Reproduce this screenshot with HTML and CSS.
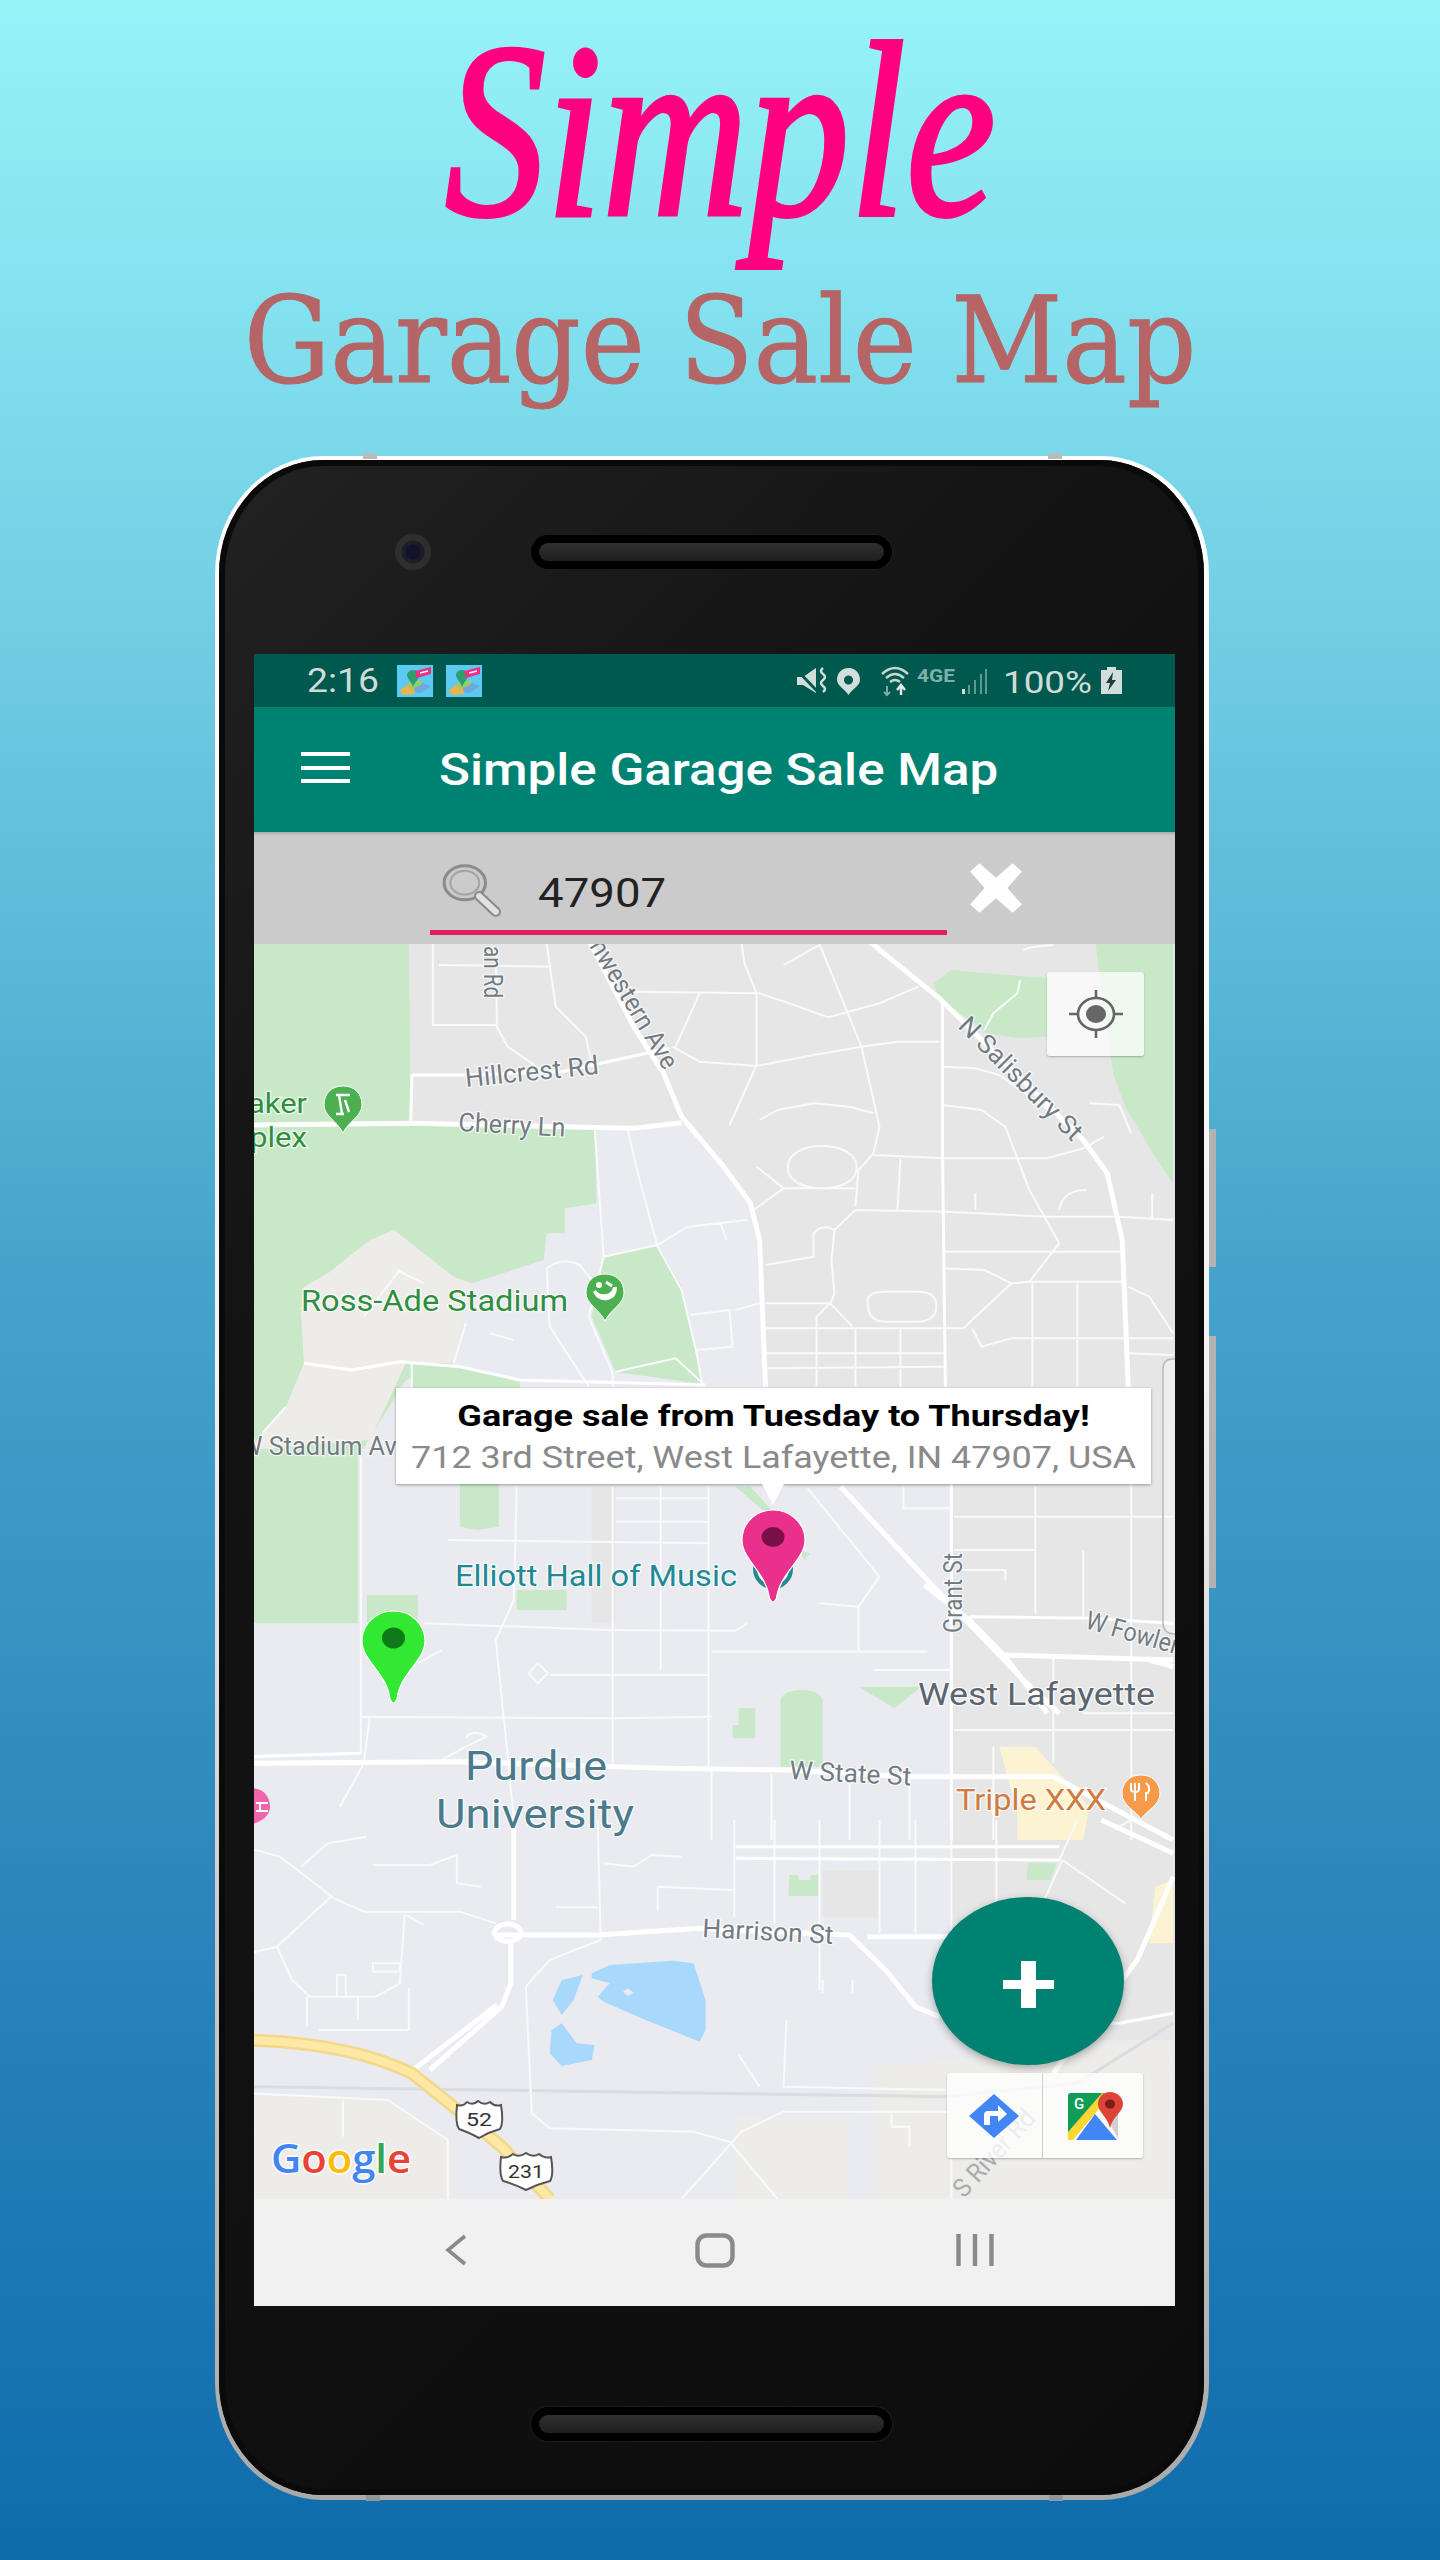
FILE: index.html
```html
<!DOCTYPE html>
<html lang="en">
<head>
<meta charset="utf-8">
<title>Simple Garage Sale Map</title>
<link rel="stylesheet" href="styles.css">
</head>
<body>
<svg class="defs" aria-hidden="true">
  <symbol id="appicon" viewBox="0 0 36 32">
    <rect width="36" height="32" fill="#5ccaf2"/>
    <path d="M3 25 L14 17 L22 20 L17 29 L6 30Z" fill="#e9b44c"/>
    <path d="M16 21 L26 18 L34 21 L24 28 L18 27Z" fill="#6fa8dc"/>
    <path d="M10 20 L18 17 L26 15 L24 20 L14 24Z" fill="#9ccc65"/>
    <path d="M16 5 C12 5 10 8 10 10 C10 14 15 17 16 22 C18 17 22 14 22 10 C22 8 20 5 16 5Z" fill="#2e9e6b"/>
    <path d="M18 6 L34 2 L34 9 L20 13Z" fill="#ec2f7e"/>
    <path d="M23 8 L31 6" stroke="#fff" stroke-width="1.4"/>
  </symbol>
</svg>

<header class="hero">
  <h1 class="script-title">Simple</h1>
  <p class="sub-title">Garage Sale Map</p>
</header>

<main class="phone">
  <span class="nub nub-tl"></span><span class="nub nub-tr"></span>
  <span class="nub nub-bl"></span><span class="nub nub-br"></span>
  <span class="side side-a"></span><span class="side side-b"></span>
  <div class="body">
    <div class="bezel-top">
      <span class="camera"></span>
      <span class="speaker"></span>
    </div>
    <section class="screen">
      <div class="status">
        <span class="time stretch">2:16</span>
        <svg class="appicon"><use href="#appicon"/></svg>
        <svg class="appicon"><use href="#appicon"/></svg>
        <svg class="status-icons" viewBox="790 654 340 53">
          <path d="M797 677 H803 L816 668 V693 L803 685 H797Z" fill="#d2dedb"/>
          <path d="M795 668 L818 692" stroke="#00594f" stroke-width="3"/>
          <path d="M823 668 q-4 3 0 6 q4 3 0 6 q-4 3 0 6 q4 3 0 6" fill="none" stroke="#d2dedb" stroke-width="2.6"/>
          <path fill-rule="evenodd" d="M848.5 668 C841 668 837 674 837 680 C837 686 845 689 848.500 695 C852 689 860 686 860 680 C860 674 856 668 848.5 668Z M848.5 675.5 a4.5 4.5 0 1 0 .01 0Z" fill="#d2dedb"/>
          <g fill="none" stroke="#c6d6d2" stroke-width="2.4">
            <path d="M882 674 Q895 662 908 674"/>
            <path d="M886 678 Q895 670 904 678"/>
            <path d="M890 682 Q895 678 900 682"/>
          </g>
          <path d="M887 686 V695 M884 692 L887 695 L890 692" fill="none" stroke="#7fa9a2" stroke-width="2"/>
          <path d="M901 695 V686 M897 690 L901 685 L905 690" fill="none" stroke="#e3ecea" stroke-width="2.4"/>
          <text class="st-4g" x="917" y="682" textLength="38" lengthAdjust="spacingAndGlyphs">4GE</text>
          <path d="M962 689 h3 v5 h-3Z" fill="#d2dedb"/>
          <path d="M968 685 h2 v9 h-2Z M974 680 h2 v14 h-2Z M980 674 h2 v20 h-2Z M985 669 h2 v25 h-2Z" fill="#5f9a8f"/>
          <text class="st-pct" x="1003" y="693" textLength="89" lengthAdjust="spacingAndGlyphs">100%</text>
          <path d="M1107 667 h9 v3 h6 v24 h-21 v-24 h6Z" fill="#d2dedb"/>
          <path d="M1113 672 L1106 683 H1110 L1108 691 L1116 680 H1112Z" fill="#1f3f3a"/>
        </svg>
      </div>
      <div class="appbar">
        <button class="menu" aria-label="Menu"><span></span><span></span><span></span></button>
        <span class="app-title stretch">Simple Garage Sale Map</span>
      </div>
      <div class="search">
        <div class="search-field">
          <svg class="search-icon" viewBox="0 0 60 52">
            <ellipse cx="24" cy="19" rx="20" ry="16.5" fill="none" stroke="#8c8c8c" stroke-width="3"/>
            <ellipse cx="24" cy="19" rx="14" ry="11.5" fill="none" stroke="#a5a5a5" stroke-width="2"/>
            <path d="M38 32 L54 47" stroke="#8a8a8a" stroke-width="10" stroke-linecap="round"/>
            <path d="M38 32 L54 47" stroke="#e2e2e2" stroke-width="6" stroke-linecap="round"/>
          </svg>
          <span class="search-text stretch">47907</span>
        </div>
        <svg class="search-clear" viewBox="0 0 58 50"><path d="M4 9 L13 1 L29 15 L45 1 L54 9 L40 25 L54 41 L45 49 L29 35 L13 49 L4 41 L18 25Z" fill="#fff"/></svg>
      </div>
      <div class="map">
        <svg class="map-base" viewBox="6.7 12 1536.3 3765" preserveAspectRatio="none">
          <rect x="0" y="0" width="1600" height="3800" fill="#e6e6e6"/>
          <path class="blue" d="M575 565 L725 550 L840 800 L860 1340 L900 1640 L1170 1640 L1170 3300 L1540 3300 L1540 3800 L0 3800 L0 1300Z"/>
          <path class="beige" d="M0 3460 L230 3480 L340 3600 V3800 H0Z M810 3530 H1000 V3800 H810Z M1040 3380 L1540 3300 V3800 H1040Z"/>
          <path class="grey" d="M1170 1640 H1540 V3000 L1320 3240 L1180 3240Z M955 2790 H1050 V2930 H955Z M570 1640 H610 V2050 H570Z"/>
          <path class="park" d="M0 0 L265 0 L268 545 L575 570 L578 790 L525 805 L525 880 L495 880 L490 960 L370 1030 L340 1270 L260 1320 L180 1550 L180 2050 L0 2050Z"/>
          <path class="beige" d="M240 870 L340 1010 L370 1030 L340 1270 L260 1270 L200 1500 L0 1530 L20 1480 L60 1400 L90 1270 L85 1120 L90 1040 L130 1000 L200 900Z"/>
          <path class="park" d="M1410 0 L1540 0 L1540 730 L1510 650 L1460 500 L1440 400 L1415 80Z M1140 130 L1170 90 L1330 115 L1330 290 L1280 295 L1230 280 L1150 175Z M590 950 L680 915 L720 1040 L745 1240 L752 1332 L610 1295 L570 1130Z M270 1270 L340 1275 L450 1320 L450 1345 H270Z"/>
          <g transform="translate(0 1320)">
            <path class="park" d="M350 310 H415 V440 L380 450 L350 440Z M195 645 H280 V730 H195Z M445 630 H528 V690 H445Z M885 960 Q890 930 920 930 Q950 930 955 960 V1160 H885Z M1015 920 H1120 L1075 985Z M815 985 H843 V1075 H805 V1035 H815Z M810 320 H835 L870 390 H855Z M915 510 L935 520 L925 540Z"/>
            <path class="yellow" d="M1250 1100 H1310 L1400 1280 L1390 1380 H1280 V1300Z"/>
            <path class="road r2" d="M605 320 V1150 M685 320 V870 M765 320 V1160 M1470 300 V1380 M1310 320 V700 M1390 510 V710 M445 320 L440 660 L410 780 L430 1130 L440 1320 M185 230 V1120 M290 730 L600 750 L810 752 L830 730 M610 355 H765 M610 425 H765 M330 480 L765 490 M610 885 H765 M185 1010 L610 1015 L770 1010 M930 325 L1050 590 L1015 680 V810 M950 670 L1015 680 M1090 320 V385 H1170 M1175 410 H1540 M1175 510 H1310 M1180 570 H1260 V600 M1040 870 H1170 M770 815 H1130 M1175 1050 H1540 M480 850 L497 880 L480 910 L465 880Z M500 885 H610 M360 1075 Q370 1045 395 1070 L360 1100 L320 1140 M770 1165 V1380 M870 1180 V1380 M1000 1180 V1380 M1100 1190 V1380 M1240 1100 V1380 M1340 830 V1150 M1390 1000 H1540 M280 850 L320 810 M200 1010 L190 1150 M190 1150 L150 1280"/>
            <path class="road r3" d="M1170 300 V1380 M1200 710 L1400 715 L1540 730 M185 1120 L0 1130"/>
            <path class="road r5" d="M985 320 L1140 620 L1290 900 L1350 1000 M1125 615 L1200 720 L1260 830 L1330 1000 M1260 825 L1540 840 M1500 840 L1540 860 M0 1150 L350 1145 L690 1165 L900 1170 L1100 1190 L1340 1190 L1540 1380"/>
          </g>
          <g class="r-upper">
            <path class="road r2" d="M315 75 L500 80 M305 12 V255 H410 L430 320 L490 395 M410 20 L412 255 M495 12 L510 200 L560 290 L570 370 M635 155 L850 160 L900 190 L965 232 L1050 190 L1115 140 M750 160 L710 320 M820 12 L825 70 L845 160 V375 L800 555 M890 75 L950 15 M950 12 L1020 320 L1050 560 L1040 640 L1015 690 L1010 800 M705 320 L750 365 L845 378 L940 345 L1020 320 L1080 305 H1150 M1155 380 L1210 385 L1250 405 L1340 520 M1155 495 L1220 510 L1260 560 L1300 750 L1350 910 L1300 1025 M850 540 L880 510 L940 490 L1000 500 L1040 520 M1040 645 L1160 655 H1330 L1390 625 L1425 590 M897 682 C897 640 925 618 953 618 C985 618 1012 640 1012 682 C1012 725 985 745 953 745 C925 745 897 725 897 682 M840 810 L890 745 H1010 M845 680 L890 745 M1010 810 L1160 815 L1330 830 H1450 L1540 840 M1085 655 L1080 810 M1010 810 L975 870 Q955 850 940 880 V950 L860 975 M975 870 L970 960 L975 1060 L968 1090 L945 1130 V1340 M968 1090 L1005 1160 M860 1090 H968 M860 1165 H1190 L1270 1030 L1300 1025 H1460 M1010 1165 V1340 M1085 1165 V1340 M860 1240 H1160 M860 1285 L1160 1280 M1030 1085 Q1030 1055 1060 1055 H1115 Q1145 1055 1145 1100 Q1145 1145 1110 1145 H1060 Q1030 1145 1030 1085Z M1155 985 L1225 990 L1270 1030 M1155 935 H1460 M1305 1030 V1340 M1380 1030 V1340 M1465 1040 L1500 1070 L1540 1180 M1205 1165 L1220 1220 L1270 1195 H1540 M1465 1240 L1540 1245 M1210 760 V810 M1350 810 Q1355 750 1395 750 M1505 760 V835 M1400 490 L1450 495 L1470 580 M1290 30 Q1300 20 1340 15 M1285 120 L1280 160 L1240 220 L1225 270 M630 570 L650 720 L680 920 L720 1050 L745 1240 L755 1340 M575 570 L590 950 L565 1130 L605 1300 V1340 M590 950 L680 915 L730 860 L830 840 M785 850 L795 900 M495 985 Q520 950 550 975 L575 1030 M495 985 L500 1160 L565 1340 M735 1125 L800 1110 L805 1220 L745 1230 M850 1090 L810 1110 M610 1295 L710 1255 L755 1330 M250 990 L190 1130 M245 990 L290 1030 M360 1150 L340 1270 M400 1180 L440 1200 M270 1270 V1345 M60 1400 L20 1480"/>
            <path class="road r3" d="M90 1270 L170 1290 L250 1265 L350 1280 L450 1320 L760 1335 M1155 180 L1155 600 L1160 1340 M270 405 H360 L520 395 L700 325 M270 405 L268 545"/>
            <path class="road r5" d="M1030 0 L1150 175 L1390 600 L1430 700 L1455 900 L1465 1340 M565 0 L640 260 L690 400 L720 530 L790 680 L835 790 L850 900 L860 1340 M0 555 L270 550 L520 560 L640 565 L720 548"/>
          </g>
          <g transform="translate(0 2640)">
            <path class="park" d="M900 165 L915 165 L915 180 H935 V165 H948 V228 H898Z M1298 130 H1345 L1335 180 H1295Z"/>
            <path class="yellow" d="M1280 0 H1390 L1350 40 L1300 20Z M1510 200 L1540 180 V370 H1500Z"/>
            <path class="water" d="M570 460 L600 435 L705 422 L740 430 L760 540 V630 L750 665 L660 600 L590 545 L580 530 L600 490 L570 475Z M555 465 L520 480 L505 540 L520 585 L540 540Z M520 610 L503 630 L500 700 L520 738 L570 720 L575 675 L545 670Z"/>
            <path class="island" d="M630 505 L640 518 L630 528 L622 515Z"/>
            <path class="transit" d="M0 800 L600 815 L1160 830 L1380 790 L1540 610"/>
            <path class="road r2" d="M0 85 L50 110 L140 235 L190 275 H350 L410 310 M135 230 L45 380 L0 400 M45 380 L70 480 L100 530 H210 L250 490 L258 285 M195 50 L130 70 L85 140 M260 285 L290 315 M205 135 H300 L345 105 V190 L385 200 M95 530 V620 M180 530 V600 M145 465 V530 H160 V465Z M205 430 H250 V455 H205Z M265 505 V630 H115 M580 0 L585 360 L500 420 L460 500 L470 880 L500 925 L740 935 L800 965 L880 1137 M808 0 V290 M875 0 V310 M950 0 V510 M590 130 L640 140 L670 105 L720 110 M680 270 V200 L805 210 M510 262 H580 M1170 0 V350 M1245 0 V600 M1050 0 V340 M1110 0 V340 M1355 120 L1320 260 M1355 120 L1460 250 M1380 0 L1350 120 M820 935 L720 1137 M820 935 L890 875 H1170 M895 600 L890 800 L1160 810 M815 705 L850 800 M0 820 L230 840 L330 960 V1137 M155 840 V950 M1070 880 V920 H1100 V980 M1170 900 V1137 M955 480 V520 M1005 480 V520 M1450 20 L1470 0"/>
            <path class="road r3" d="M810 80 H1350 M810 115 L1350 120 M1450 610 L1540 580 M1420 610 L1450 610"/>
            <path class="road r5" d="M410 345 H580 L750 325 L1000 345 L1060 450 L1110 560 L1150 590 M1030 350 H1180 M440 0 V300 M435 360 V490 L420 560 L300 750 M412 555 L272 750 M1420 0 L1540 100 M1540 170 L1480 420 L1340 760"/>
            <ellipse class="road r5" cx="430" cy="338" rx="22" ry="26"/>
            <path class="hw-edge" d="M0 660 Q170 670 270 760 L340 860 L420 980 L500 1137"/>
            <path class="hw" d="M0 660 Q170 670 270 760 L340 860 L420 980 L500 1137"/>
          </g>
        </svg>

        <svg class="map-over" viewBox="254 944 921 1255">
          <path class="scrollish" d="M1175 1359 H1172 Q1163 1359 1163 1370 V1622 Q1163 1634 1175 1634"/>
          <g class="lb lb-grey">
            <text transform="translate(484 946) rotate(90)" x="0" y="0" textLength="52" lengthAdjust="spacingAndGlyphs">an Rd</text>
            <text transform="translate(589 946) rotate(59)" x="0" y="0" textLength="146" lengthAdjust="spacingAndGlyphs">nwestern Ave</text>
            <text transform="translate(466 1087) rotate(-5.6)" x="0" y="0" textLength="134" lengthAdjust="spacingAndGlyphs">Hillcrest Rd</text>
            <text transform="translate(458 1131) rotate(3)" x="0" y="0" textLength="107" lengthAdjust="spacingAndGlyphs">Cherry Ln</text>
            <text transform="translate(957 1027) rotate(45)" x="0" y="0" textLength="163" lengthAdjust="spacingAndGlyphs">N Salisbury St</text>
            <text x="240" y="1455" textLength="170" lengthAdjust="spacingAndGlyphs">W Stadium Ave</text>
            <text transform="translate(962 1633) rotate(-90)" x="0" y="0" textLength="80" lengthAdjust="spacingAndGlyphs">Grant St</text>
            <text transform="translate(1084 1628) rotate(16)" x="0" y="0" textLength="96" lengthAdjust="spacingAndGlyphs">W Fowler</text>
            <text transform="translate(789 1779) rotate(3)" x="0" y="0" textLength="122" lengthAdjust="spacingAndGlyphs">W State St</text>
            <text transform="translate(702 1937) rotate(3)" x="0" y="0" textLength="131" lengthAdjust="spacingAndGlyphs">Harrison St</text>
            <text class="faded" transform="translate(964 2199) rotate(-47.6)" x="0" y="0" textLength="108" lengthAdjust="spacingAndGlyphs">S River Rd</text>
          </g>
          <g class="lb lb-green">
            <text x="248" y="1113" textLength="59" lengthAdjust="spacingAndGlyphs">aker</text>
            <text x="250" y="1147" textLength="57" lengthAdjust="spacingAndGlyphs">plex</text>
            <text class="lb-md" x="301" y="1311" textLength="267" lengthAdjust="spacingAndGlyphs">Ross-Ade Stadium</text>
          </g>
          <text class="lb lb-md lb-teal" x="455" y="1586" textLength="282" lengthAdjust="spacingAndGlyphs">Elliott Hall of Music</text>
          <text class="lb lb-city" x="918" y="1705" textLength="237" lengthAdjust="spacingAndGlyphs">West Lafayette</text>
          <text class="lb lb-uni" x="465" y="1780" textLength="142" lengthAdjust="spacingAndGlyphs">Purdue</text>
          <text class="lb lb-uni" x="436" y="1828" textLength="198" lengthAdjust="spacingAndGlyphs">University</text>
          <text class="lb lb-md lb-orange" x="956" y="1810" textLength="150" lengthAdjust="spacingAndGlyphs">Triple XXX</text>

          <g transform="translate(324 1086)">
            <path d="M19 0 C8 0 0 7 0 19 C0 30 14 36 19 47 C24 36 38 30 38 19 C38 7 30 0 19 0Z" fill="#4caf50" stroke="#fff" stroke-width="1"/>
            <path d="M12 9 H26 M15 9 L18 28 M21 14 L25 26 M12 28 H20" stroke="#fff" stroke-width="2.4" fill="none"/>
          </g>
          <g transform="translate(586 1274)">
            <path d="M19 0 C8 0 0 7 0 19 C0 30 14 36 19 47 C24 36 38 30 38 19 C38 7 30 0 19 0Z" fill="#4caf50" stroke="#fff" stroke-width="1"/>
            <path d="M7 18 Q12 28 22 26 Q31 24 31 13 L27 13 Q26 19 20 20 Q12 21 10 16Z" fill="#fff"/>
            <circle cx="13" cy="11" r="3" fill="#fff"/><path d="M20 8 L26 12" stroke="#fff" stroke-width="3"/>
          </g>
          <g transform="translate(1122 1775)">
            <path d="M19 0 C8 0 0 7 0 19 C0 30 14 36 19 44 C24 36 38 30 38 19 C38 7 30 0 19 0Z" fill="#f59b4b" stroke="#fff" stroke-width="1"/>
            <path d="M13 8 V26 M9 8 V14 Q9 17 13 17 Q17 17 17 14 V8 M24 8 Q29 12 26 18 H24 V26" stroke="#fff" stroke-width="2" fill="none"/>
          </g>
          <g transform="translate(232 1788)">
            <path d="M19 0 C8 0 0 7 0 19 C0 30 14 36 19 36 C24 36 38 30 38 19 C38 7 30 0 19 0Z" fill="#f064ae"/>
            <path d="M24 15 H36 M24 23 H36 M28 15 V23" stroke="#fff" stroke-width="2"/>
          </g>

          <circle cx="773" cy="1569" r="18" fill="none" stroke="#1f8a96" stroke-width="4"/>
          <path class="mk-pink" d="M773 1510 C756 1510 742 1523 742 1540 C742 1560 766 1572 769.5 1598 Q773 1606 776.5 1598 C780 1572 805 1560 805 1540 C805 1523 790 1510 773 1510Z"/>
          <ellipse cx="773" cy="1537" rx="11.5" ry="10" fill="#7a1048"/>
          <path class="mk-green" d="M393.5 1611 C376 1611 362 1624 362 1641 C362 1661 387 1673 390 1699 Q393.5 1707 397 1699 C400 1673 425 1661 425 1641 C425 1624 411 1611 393.5 1611Z"/>
          <ellipse cx="393.5" cy="1638" rx="11.5" ry="10.5" fill="#0f7a18"/>

          <g class="shield" transform="translate(455 2099)">
            <path d="M2 6 Q8 8 12 3 Q18 7 23 2 Q29 7 35 3 Q40 8 46 6 Q49 24 45 30 Q34 33 24 39 Q13 33 4 30 Q0 24 2 6Z"/>
            <text x="24" y="27" text-anchor="middle" textLength="26" lengthAdjust="spacingAndGlyphs">52</text>
          </g>
          <g class="shield" transform="translate(499 2151)">
            <path d="M2 6 Q8 8 14 3 Q20 7 27 2 Q34 7 40 3 Q46 8 52 6 Q55 24 51 30 Q39 33 27 39 Q15 33 4 30 Q0 24 2 6Z"/>
            <text x="27" y="27" text-anchor="middle" textLength="36" lengthAdjust="spacingAndGlyphs">231</text>
          </g>
          <text class="google" x="271" y="2173" textLength="140" lengthAdjust="spacingAndGlyphs"><tspan fill="#4285f4">G</tspan><tspan fill="#ea4335">o</tspan><tspan fill="#fbbc05">o</tspan><tspan fill="#4285f4">g</tspan><tspan fill="#34a853">l</tspan><tspan fill="#ea4335">e</tspan></text>
        </svg>

        <button class="locate" aria-label="My location">
          <svg class="locate-icon" viewBox="0 0 54 48">
            <ellipse cx="27" cy="24" rx="18" ry="16" fill="none" stroke="#666" stroke-width="2.6"/>
            <ellipse cx="27" cy="24" rx="10" ry="9" fill="#666"/>
            <path d="M27 0 V8 M27 40 V48 M0 24 H9 M45 24 H54" stroke="#666" stroke-width="2.6"/>
          </svg>
        </button>

        <div class="bubble">
          <div class="bubble-title">Garage sale from Tuesday to Thursday!</div>
          <div class="bubble-addr">712 3rd Street, West Lafayette, IN 47907, USA</div>
        </div>

        <button class="fab" aria-label="Add"><svg class="fab-plus" viewBox="0 0 51 47"><path d="M18 0 H33 V19 H51 V28 H33 V47 H18 V28 H0 V19 H18Z" fill="#fff"/></svg></button>

        <div class="maptools">
          <div class="tool">
            <svg class="tool-dir" viewBox="0 0 50 44">
              <path d="M25 0 L50 22 L25 44 L0 22Z" fill="#4285f4"/>
              <path d="M15 31 V21 Q15 17 19 17 H29 V11 L38 20 L29 28 V22 H21 V31Z" fill="#fff"/>
            </svg>
          </div>
          <div class="tool tool-right">
            <svg class="tool-maps" viewBox="0 0 55 48">
              <path d="M0 4 Q0 1 3 1 H36 L0 44Z" fill="#0f9d58"/>
              <path d="M0 40 L34 1 L40 6 L5 48 H0Z" fill="#fdd835"/>
              <path d="M8 48 L27 22 L49 48Z" fill="#4285f4"/>
              <path d="M33 17 L50 12 V46 Z" fill="#d0d0d0"/>
              <path d="M42 0 C35 0 30 5 30 12 C30 20 39 24 42 36 C45 24 55 20 55 12 C55 5 49 0 42 0Z" fill="#db4437"/>
              <ellipse cx="42" cy="12" rx="5" ry="4.5" fill="#7c1d16"/>
              <text class="maps-g" x="6" y="17">G</text>
            </svg>
          </div>
        </div>
      </div>
      <nav class="navbar">
        <svg class="nav-ic nav-back" viewBox="0 0 22 32"><path d="M20 2 L3 16 L20 30" fill="none" stroke="#8a8a8a" stroke-width="3.6"/></svg>
        <svg class="nav-ic nav-home" viewBox="0 0 40 35"><rect x="2.5" y="2.5" width="35" height="30" rx="9" fill="none" stroke="#8a8a8a" stroke-width="4.4"/></svg>
        <svg class="nav-ic nav-recent" viewBox="0 0 38 32"><path d="M2.5 0 V32 M19 0 V32 M35.500 0 V32" stroke="#8a8a8a" stroke-width="4.4"/></svg>
      </nav>
    </section>
    <div class="bezel-bottom"><span class="speaker"></span></div>
  </div>
</main>
</body>
</html>
```

FILE: styles.css
```css
* { box-sizing: border-box; }
html, body { margin: 0; padding: 0; }
body {
  width: 1440px;
  height: 2560px;
  overflow: hidden;
  background: linear-gradient(180deg, #96f3f8 0%, #70cde4 25%, #45a3cb 50%, #2b85bb 75%, #0f6cac 100%);
  font-family: Roboto, "Liberation Sans", sans-serif;
}
.defs { position: absolute; width: 0; height: 0; }
.stretch { display: inline-block; transform-origin: 0 50%; }

.hero { height: 456px; display: flex; flex-direction: column; align-items: center; }
.script-title {
  margin: 0;
  height: 268px;
  font: italic 400 250px/262px "Liberation Serif", serif;
  color: #ff0080;
  -webkit-text-stroke: 4px #ff0080;
  transform: scaleX(.81);
}
.sub-title {
  margin: 0;
  font-family: "DejaVu Serif", serif;
  font-stretch: condensed;
  font-size: 120.5px;
  line-height: 144px;
  color: #b56565;
  -webkit-text-stroke: 1px #b56565;
  white-space: nowrap;
}

.phone {
  position: relative;
  width: 994px;
  height: 2044px;
  margin-left: 215px;
  padding: 4px 5px 5px 4px;
  border-radius: 108px / 118px;
  background: linear-gradient(180deg, #fff 0%, #f2f2f2 45%, #c8c8c8 75%, #a9a9a9 100%);
}
.nub { position: absolute; width: 14px; height: 6px; background: #b6bcc0; }
.nub-tl { left: 148px; top: -3px; }
.nub-tr { left: 833px; top: -3px; }
.nub-bl { left: 151px; bottom: -1px; background: #8f9599; }
.nub-br { left: 834px; bottom: -1px; background: #8f9599; }
.side { position: absolute; left: 994px; width: 7px; background: #b2b2b2; }
.side-a { top: 673px; height: 138px; }
.side-b { top: 880px; height: 252px; }

.body {
  height: 2035px;
  padding: 0 30px 0 35px;
  border-radius: 104px / 114px;
  background: linear-gradient(135deg, #222 0%, #131313 30%, #0d0d0d 100%);
  box-shadow: inset 0 0 0 6px #0a0a0a;
}
.bezel-top { height: 194px; padding: 75px 0 0 141px; display: flex; align-items: flex-start; }
.camera {
  width: 36px;
  height: 36px;
  margin-top: -1px;
  margin-right: 100px;
  border-radius: 50%;
  background: radial-gradient(circle at 50% 50%, #12122a 0 7px, #1c1c2a 8px 11px, #2e2e2e 12px 18px);
}
.speaker {
  display: block;
  width: 361px;
  height: 34px;
  padding: 8px;
  border-radius: 17px;
  background: #000;
  box-shadow: 0 0 0 1px #1c1c1c;
}
.speaker::before {
  content: "";
  display: block;
  height: 18px;
  border-radius: 9px;
  background: linear-gradient(180deg, #2f2f2f, #1f1f1f);
}
.bezel-bottom { height: 189px; padding: 101px 0 0 0; display: flex; justify-content: center; }
.bezel-bottom .speaker { margin-left: -6px; }

.screen { width: 921px; height: 1652px; display: flex; flex-direction: column; }
.status {
  height: 53px;
  flex: none;
  background: #00594f;
  display: flex;
  align-items: center;
  padding-left: 53px;
}
.time { width: 90px; font-size: 33px; color: #cfdcd9; transform: scaleX(1.13); }
.appicon { width: 36px; height: 32px; margin-right: 13px; }
.status-icons { width: 340px; height: 53px; margin-left: auto; margin-right: 45px; }
.st-4g { font: 700 19px Roboto, sans-serif; fill: #7fb0a8; }
.st-pct { font: 400 32px Roboto, sans-serif; fill: #cfdcd9; }

.appbar {
  height: 125px;
  flex: none;
  background: #008272;
  display: flex;
  align-items: center;
  padding-left: 47px;
  box-shadow: 0 2px 2px rgba(0, 0, 0, .15);
  position: relative;
}
.menu {
  width: 49px;
  height: 31px;
  padding: 0;
  border: 0;
  background: none;
  display: flex;
  flex-direction: column;
  justify-content: space-between;
  margin-right: 89px;
  margin-bottom: 4px;
}
.menu span { display: block; height: 4px; background: #fff; }
.app-title { color: #fff; font-size: 44px; font-weight: 500; transform: scaleX(1.162); white-space: nowrap; }

.search {
  height: 112px;
  flex: none;
  background: #cbcbcb;
  display: flex;
  align-items: flex-start;
  padding: 0 0 0 176px;
}
.search-field {
  width: 517px;
  height: 103px;
  border-bottom: 5px solid #e0205e;
  display: flex;
  align-items: flex-start;
  padding: 31px 0 0 10px;
}
.search-icon { width: 62px; height: 54px; margin-right: 36px; flex: none; }
.search-text { font-size: 40px; line-height: 48px; color: #222; transform: scaleX(1.14); margin-top: 7px; }
.search-clear { width: 60px; height: 52px; margin: 30px 0 0 19px; }

.map { position: relative; height: 1255px; flex: none; overflow: hidden; }
.map-base { display: block; width: 921px; height: 1255px; }
.map-base path, .map-base ellipse { vector-effect: non-scaling-stroke; }
.blue { fill: #e9ebf0; }
.beige { fill: #eeece9; }
.grey { fill: #e6e6e6; }
.park { fill: #c8e8c8; }
.yellow { fill: #fbf3d2; }
.water { fill: #a8d8fc; }
.island { fill: #e9ebf0; }
.road { fill: none; stroke: #fff; stroke-linejoin: round; }
.r2 { stroke-width: 2px; stroke: #f9fafb; }
.r3 { stroke-width: 3px; }
.r5 { stroke-width: 5px; }
.transit { fill: none; stroke: #d9dce2; stroke-width: 3px; }
.hw-edge { fill: none; stroke: #f3d888; stroke-width: 13px; }
.hw { fill: none; stroke: #fde8a5; stroke-width: 8px; }

.map-over { position: absolute; left: 0; top: 0; width: 921px; height: 1255px; }
.scrollish { fill: rgba(255, 255, 255, .35); stroke: #b9b9b9; stroke-width: 1.5; }
.lb { font-family: Roboto, sans-serif; font-size: 26px; paint-order: stroke; stroke: rgba(255, 255, 255, .75); stroke-width: 2.5px; }
.lb-grey { fill: #737b82; }
.faded { fill: #a9adb0; stroke: none; }
.lb-green { fill: #2f8f3e; font-size: 28px; }
.lb-md { font-size: 30px; }
.lb-teal { fill: #1f8a96; }
.lb-orange { fill: #cf7c40; }
.lb-city { font-size: 32px; fill: #5a6570; }
.lb-uni { font-size: 40px; fill: #4b7a8c; }
.mk-pink { fill: #e8308c; stroke: #fff; stroke-width: 1.2; }
.mk-green { fill: #33e833; stroke: #fff; stroke-width: 1.2; }
.shield path { fill: #fff; stroke: #555; stroke-width: 2; }
.shield text { font: 400 19px Roboto, sans-serif; fill: #333; }
.google { font: 600 40px "Open Sans", sans-serif; paint-order: stroke; stroke: rgba(255, 255, 255, .9); stroke-width: 3px; }
.maps-g { font: 500 15px Roboto, sans-serif; fill: #fff; }

.locate {
  position: absolute;
  left: 793px;
  top: 28px;
  width: 97px;
  height: 84px;
  padding: 0;
  border: 0;
  border-radius: 3px;
  background: rgba(255, 255, 255, .72);
  box-shadow: 0 1px 2px rgba(0, 0, 0, .25);
  display: flex;
  align-items: center;
  justify-content: center;
}
.locate-icon { width: 54px; height: 48px; }

.bubble {
  position: absolute;
  left: 142px;
  top: 444px;
  width: 755px;
  height: 96px;
  background: #fff;
  box-shadow: 0 1px 3px rgba(0, 0, 0, .35);
  text-align: center;
  padding-top: 8px;
}
.bubble::after {
  content: "";
  position: absolute;
  left: 366px;
  top: 96px;
  border-left: 11px solid transparent;
  border-right: 11px solid transparent;
  border-top: 21px solid #fff;
}
.bubble-title { font-size: 30px; line-height: 40px; font-weight: 700; color: #000; white-space: nowrap; transform: scaleX(1.2); }
.bubble-addr { font-size: 31px; line-height: 44px; color: #8a8a8a; white-space: nowrap; transform: scaleX(1.158); }

.fab {
  position: absolute;
  left: 678px;
  top: 953px;
  width: 192px;
  height: 168px;
  padding: 0;
  border: 0;
  border-radius: 50%;
  background: #008272;
  box-shadow: 0 3px 8px rgba(0, 0, 0, .3);
  display: flex;
  align-items: center;
  justify-content: center;
}
.fab-plus { width: 51px; height: 47px; margin-top: 6px; }

.maptools {
  position: absolute;
  left: 693px;
  top: 1129px;
  width: 196px;
  height: 85px;
  display: flex;
  border-radius: 3px;
  background: rgba(255, 255, 255, .78);
  box-shadow: 0 1px 2px rgba(0, 0, 0, .25);
}
.tool { flex: 1; display: flex; align-items: center; justify-content: center; }
.tool + .tool { border-left: 1px solid #cfcfcf; }
.tool-right { padding-left: 6px; }
.tool-dir { width: 50px; height: 44px; }
.tool-maps { width: 55px; height: 48px; }

.navbar {
  flex: 1;
  background: #f1f1f1;
  display: flex;
  align-items: center;
  padding: 0 0 5px 191px;
}
.nav-back { width: 22px; height: 32px; margin-right: 228px; }
.nav-home { width: 40px; height: 35px; margin-right: 221px; }
.nav-recent { width: 38px; height: 32px; }
```
